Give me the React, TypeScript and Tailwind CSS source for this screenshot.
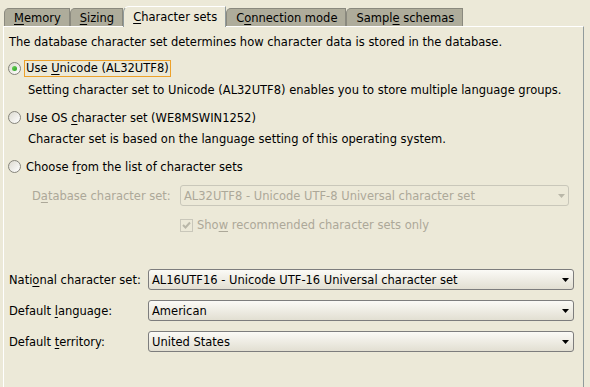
import React from 'react'

const font = { fontFamily: '"DejaVu Sans", Tahoma, sans-serif' }

function U({ children }: { children: React.ReactNode }) {
  return <span className="underline underline-offset-2">{children}</span>
}

function Tab({ children, active }: { children: React.ReactNode; active?: boolean }) {
  if (active) {
    return (
      <div className="relative z-10 -mb-px flex h-[21px] items-center rounded-tl-[6px] border border-b-0 border-[#919b9c] border-t-[#ffffff] bg-[#ece9d8] pl-[9px] pr-[8px] text-black">
        {children}
      </div>
    )
  }
  return (
    <div className="flex h-[18px] items-center rounded-tl-[5px] border border-b-0 border-[#8a897e] bg-[#aeac9b] pl-[9px] pr-[8px] text-black">
      {children}
    </div>
  )
}

function Radio({ checked }: { checked?: boolean }) {
  return (
    <div className="-ml-px flex h-[13px] w-[13px] shrink-0 items-center justify-center rounded-full border border-[#85847b] bg-gradient-to-br from-[#dcdad0] to-[#ffffff]">
      {checked && <div className="h-[5px] w-[5px] rounded-full bg-gradient-to-br from-[#6fd35a] to-[#21a121]" />}
    </div>
  )
}

function Arrow({ disabled }: { disabled?: boolean }) {
  return (
    <svg width="7" height="4" viewBox="0 0 7 4" className="shrink-0">
      <path d="M0 0 H7 L3.5 4 Z" fill={disabled ? '#b9b7a8' : '#000000'} />
    </svg>
  )
}

function Combo({ value, disabled, w }: { value: string; disabled?: boolean; w: string }) {
  return (
    <div
      className={
        disabled
          ? `flex h-[21px] ${w} items-center justify-between rounded-[3px] border border-[#c9c7ba] bg-[#ece9d8] pl-[3px] pr-[3px] text-[#aca899]`
          : `flex h-[21px] ${w} items-center justify-between rounded-[3px] border border-[#7d7d7d] bg-gradient-to-b from-[#fbfaf6] to-[#e2dfd2] pl-[3px] pr-[4px] text-black`
      }
    >
      <span>{value}</span>
      <Arrow disabled={disabled} />
    </div>
  )
}

export default function App() {
  return (
    <div style={font} className="h-[387px] w-[590px] overflow-hidden bg-[#ece9d8] text-[11.5px] leading-[14px] text-black">
      {/* Tabs */}
      <div className="flex h-[26px] items-end pl-[4px]">
        <Tab><span><U>M</U>emory</span></Tab>
        <Tab><span><U>S</U>izing</span></Tab>
        <Tab active><span><U>C</U>haracter sets</span></Tab>
        <Tab><span>C<U>o</U>nnection mode</span></Tab>
        <Tab><span>Sampl<U>e</U> schemas</span></Tab>
      </div>

      {/* Panel */}
      <div className="ml-[3px] h-[361px] w-[581px] border-l border-t border-r border-l-[#ffffff] border-t-[#ffffff] border-r-[#919b9c] pl-[5px] pt-[8px]">
        <div className="h-[14px]">The database character set determines how character data is stored in the database.</div>

        <div className="mt-[11px] flex h-[17px] items-center">
          <Radio checked />
          <div className="ml-[3px] border border-[#eda12a] px-[1px] leading-[15px]">Use <U>U</U>nicode (AL32UTF8)</div>
        </div>
        <div className="mt-[6px] h-[14px] pl-[19px]">Setting character set to Unicode (AL32UTF8) enables you to store multiple language groups.</div>

        <div className="mt-[12px] flex h-[17px] items-center">
          <Radio />
          <div className="ml-[5px]">Use OS <U>c</U>haracter set (WE8MSWIN1252)</div>
        </div>
        <div className="mt-[6px] h-[14px] pl-[19px]">Character set is based on the language setting of this operating system.</div>

        <div className="mt-[12px] flex h-[17px] items-center">
          <Radio />
          <div className="ml-[5px]">Choose f<U>r</U>om the list of character sets</div>
        </div>

        <div className="mt-[10px] flex items-center text-[#aca899]">
          <div className="w-[171px] pl-[23px]">D<U>a</U>tabase character set:</div>
          <Combo disabled w="w-[389px]" value="AL32UTF8 - Unicode UTF-8 Universal character set" />
        </div>

        <div className="mt-[12px] flex h-[14px] items-center pl-[171px] text-[#aca899]">
          <div className="flex h-[13px] w-[13px] items-center justify-center border border-[#c9c7ba] bg-[#ece9d8]">
            <svg width="9" height="8" viewBox="0 0 9 8">
              <path d="M1 4 L3.5 6.5 L8 1.5" fill="none" stroke="#b9b7a8" strokeWidth="2" />
            </svg>
          </div>
          <div className="ml-[4px]">Sho<U>w</U> recommended character sets only</div>
        </div>

        <div className="mt-[37px] flex items-center">
          <div className="w-[139px]">Nati<U>o</U>nal character set:</div>
          <Combo w="w-[426px]" value="AL16UTF16 - Unicode UTF-16 Universal character set" />
        </div>
        <div className="mt-[10px] flex items-center">
          <div className="w-[139px]">Default <U>l</U>anguage:</div>
          <Combo w="w-[426px]" value="American" />
        </div>
        <div className="mt-[10px] flex items-center">
          <div className="w-[139px]">Default <U>t</U>erritory:</div>
          <Combo w="w-[426px]" value="United States" />
        </div>
      </div>
    </div>
  )
}
